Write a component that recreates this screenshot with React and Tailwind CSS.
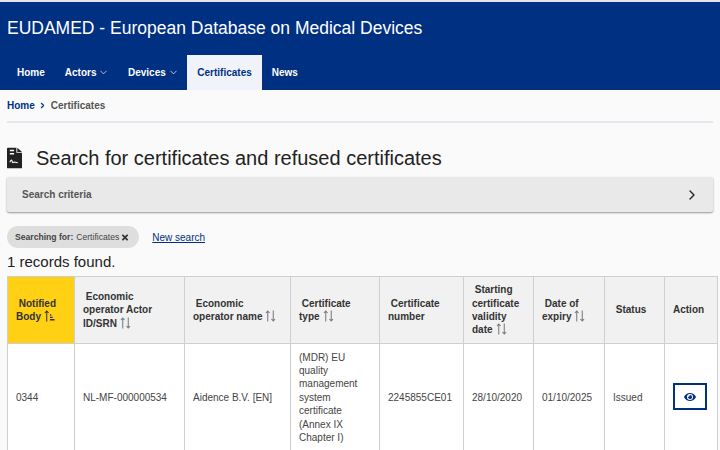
import React from "react";
import { ChevronDown, ChevronRight } from "lucide-react";
import { FaEye, FaTimes } from "react-icons/fa";

function SortIcon({ active }) {
  return (
    <svg viewBox="0 0 12 13" className="inline-block w-[11px] h-[12px] ml-[3px] align-[-2px]" fill="none" strokeWidth="1.1">
      <g stroke={active ? "#333333" : "#777777"}>
        <path d="M3 12.5V1M1 3.2 3 1l2 2.2" />
        {active ? (
          <path d="M6.5 5.5h1.5M6.500 8h3M6.500 10.500h5" strokeWidth="1.6" />
        ) : (
          <path d="M9 .5V12M7 9.8 9 12l2-2.2" />
        )}
      </g>
    </svg>
  );
}

function DocIcon() {
  return (
    <svg viewBox="0 0 16 22" className="w-[15px] h-[22px] shrink-0">
      <path d="M1 0h9v5.500h6V21a1 1 0 0 1-1 1H1a1 1 0 0 1-1-1V1a1 1 0 0 1 1-1Z" fill="#222222" />
      <path d="M11 0l5 4.500h-5Z" fill="#222222" />
      <path d="M3 3h4.500M3 6.500h4.500" stroke="#fafafa" strokeWidth="1.500" />
      <path d="M3 15.500c1.500-3 2-3 2.500-1s1 1.500 2 1 1.500.5 4 .5" stroke="#fafafa" strokeWidth="1.200" fill="none" />
    </svg>
  );
}

const columns = [
  { w: "w-[67px]", head: <>&nbsp;Notified Body<SortIcon active /></>, yellow: true, cell: "0344" },
  { w: "w-[110px]", head: <>&nbsp;Economic operator Actor ID/SRN<SortIcon /></>, cell: "NL-MF-000000534" },
  { w: "w-[106px]", head: <>&nbsp;Economic operator name<SortIcon /></>, cell: "Aidence B.V. [EN]" },
  { w: "w-[89px]", head: <>&nbsp;Certificate type<SortIcon /></>, cell: "(MDR) EU quality management system certificate (Annex IX Chapter I)" },
  { w: "w-[84px]", head: <>&nbsp;Certificate number</>, cell: "2245855CE01" },
  { w: "w-[70px]", head: <>&nbsp;Starting certificate validity date<SortIcon /></>, cell: "28/10/2020" },
  { w: "w-[71px]", head: <>&nbsp;Date of expiry<SortIcon /></>, cell: "01/10/2025" },
  { w: "w-[60px]", head: <>&nbsp;Status</>, cell: "Issued" },
  { w: "w-[53px]", head: "Action", action: true },
];

export default function App() {
  return (
    <div className="h-[450px] overflow-hidden bg-[#fafafa] font-['Liberation_Sans',Arial,sans-serif] text-[#333333]">
      <header className="bg-[#003082] border-t-2 border-[#dfe4ee] text-white">
        <h1 className="px-[7px] pt-[14px] h-[53px] text-[17.500px] leading-[24px]">
          EUDAMED - European Database on Medical Devices
        </h1>
        <nav className="flex h-[35px] px-[7px] text-[10px] font-bold items-stretch">
          <a className="px-[10px] flex items-center">Home</a>
          <a className="px-[10px] flex items-center">
            Actors
            <ChevronDown className="w-[11px] h-[11px] ml-[2px] -mr-[1.500px]" strokeWidth={1.5} />
          </a>
          <a className="px-[10px] flex items-center">
            Devices
            <ChevronDown className="w-[11px] h-[11px] ml-[2px] -mr-[1.500px]" strokeWidth={1.5} />
          </a>
          <a className="px-[10px] flex items-center bg-[#f0f3f9] text-[#003082]">Certificates</a>
          <a className="px-[10px] flex items-center">News</a>
        </nav>
      </header>

      <main className="px-[7px]">
        <div className="flex items-center h-[33px] border-b-2 border-[#e4e7f0] text-[10px] font-bold">
          <a className="text-[#003082]">Home</a>
          <ChevronRight className="w-[9px] h-[9px] mx-[3.500px] text-[#003082]" strokeWidth={3} />
          <span className="text-[#555555]">Certificates</span>
        </div>

        <div className="flex items-center gap-[14px] mt-[23px] h-[24px]">
          <DocIcon />
          <h2 className="text-[20px] leading-[24px] text-[#222222]">Search for certificates and refused certificates</h2>
        </div>

        <div className="flex items-center justify-between mt-[7px] h-[35px] pl-[15px] pr-[13px] bg-[#e9e9e9] rounded-[2px] shadow-[0_1px_2px_rgba(0,0,0,0.4)]">
          <span className="text-[10px] font-bold text-[#555555]">Search criteria</span>
          <ChevronRight className="w-[16px] h-[16px] text-[#222222]" />
        </div>

        <div className="flex items-center mt-[14px] h-[22px]">
          <div className="flex items-center h-[22px] pl-[8px] pr-[10px] rounded-full bg-[#dedede] text-[8.600px] text-[#444444]">
            <b>Searching for:</b>
            <span className="ml-[3px]">Certificates</span>
            <FaTimes className="ml-[2px] w-[8px] h-[9px] text-[#333333]" />
          </div>
          <a className="ml-[13px] text-[10px] text-[#003082] underline">New search</a>
        </div>

        <p className="mt-[3px] h-[22px] text-[15px] leading-[22px] text-[#222222]">1 records found.</p>

        <table className="table-fixed w-[710px] mt-[3px] border-collapse text-[10px]">
          <thead>
            <tr className="h-[67px]">
              {columns.map((col, i) => (
                <th
                  key={i}
                  className={`${col.w} px-[8px] py-0 border border-[#cfcfcf] text-left font-bold leading-[13.400px] ${
                    col.yellow ? "bg-[#ffd013]" : "bg-[#f1f1f1]"
                  }`}
                >
                  {col.head}
                </th>
              ))}
            </tr>
          </thead>
          <tbody>
            <tr className="h-[108px] bg-white">
              {columns.map((col, i) => (
                <td key={i} className="px-[8px] border border-[#cfcfcf] text-[#444444] leading-[13.400px]">
                  {col.action ? (
                    <button className="flex items-center justify-center w-[34px] h-[27px] mb-[2px] border-2 border-[#003082] text-[#003082]">
                      <FaEye className="w-[12px] h-[12px]" />
                    </button>
                  ) : (
                    col.cell
                  )}
                </td>
              ))}
            </tr>
          </tbody>
        </table>
      </main>
    </div>
  );
}
